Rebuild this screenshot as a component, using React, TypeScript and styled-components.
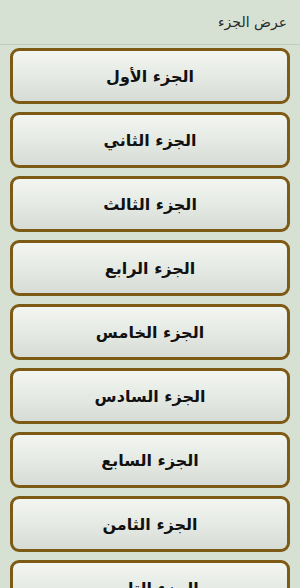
import styled, { createGlobalStyle } from "styled-components";

const GlobalStyle = createGlobalStyle`
  html, body {
    margin: 0;
    padding: 0;
    background: #d6e1d3;
  }
  body {
    font-family: "DejaVu Sans", "Noto Sans", sans-serif;
  }
`;

const Screen = styled.div`
  width: 300px;
  height: 588px;
  overflow: hidden;
  background: #d6e1d3;
  direction: rtl;
`;

const Header = styled.div`
  height: 44px;
  display: flex;
  align-items: center;
  padding: 0 13px;
  font-size: 14px;
  color: #2a2a2a;
  border-bottom: 1px solid #bfcbbd;
`;

const List = styled.div`
  display: flex;
  flex-direction: column;
  gap: 8px;
  padding: 3px 10px 0;
`;

const PartButton = styled.div`
  box-sizing: border-box;
  height: 56px;
  flex-shrink: 0;
  display: flex;
  align-items: center;
  justify-content: center;
  border: 3px solid #7d5b17;
  border-radius: 9px;
  background: linear-gradient(to bottom, #f3f5f1 0%, #e7ebe5 45%, #d8dcd6 100%);
  font-size: 16px;
  font-weight: bold;
  color: #111;
  cursor: pointer;
`;

const parts = [
  "الجزء الأول",
  "الجزء الثاني",
  "الجزء الثالث",
  "الجزء الرابع",
  "الجزء الخامس",
  "الجزء السادس",
  "الجزء السابع",
  "الجزء الثامن",
  "الجزء التاسع",
  "الجزء العاشر",
];

const App = () => {
  return (
    <Screen>
      <GlobalStyle />
      <Header>عرض الجزء</Header>
      <List>
        {parts.map((p) => (
          <PartButton key={p}>{p}</PartButton>
        ))}
      </List>
    </Screen>
  );
};

export default App;
